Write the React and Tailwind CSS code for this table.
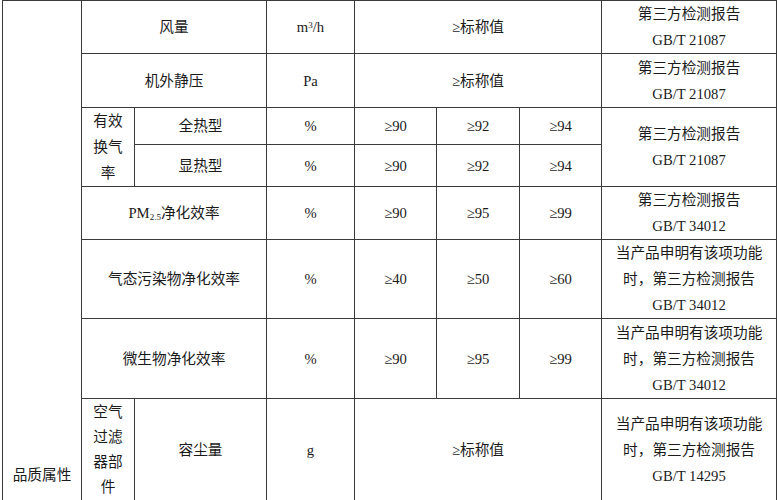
import React from 'react'

const cell = "border border-[#3a3a3a] text-center align-middle px-1 py-0"

const Remark = ({ lines }) => (
    <td className={cell}>
        {lines.map((l, i) => (
            <div key={i}>{l}</div>
        ))}
    </td>
)

const App = () => {
    return (
        <div lang="zh-CN" className="bg-white w-[777px] h-[500px] pl-[2px] overflow-hidden">
            <table
                className="border-collapse table-fixed w-[774px] text-[14.67px] leading-[26px] text-[#1a1a1a]"
                style={{ fontFamily: '"Liberation Serif", "Noto Sans CJK SC", serif' }}
            >
                <colgroup>
                    <col className="w-[79px]" />
                    <col className="w-[53px]" />
                    <col className="w-[132px]" />
                    <col className="w-[88px]" />
                    <col className="w-[82px]" />
                    <col className="w-[83px]" />
                    <col className="w-[82px]" />
                    <col className="w-[175px]" />
                </colgroup>
                <tbody>
                    <tr className="h-[52px]">
                        <td rowSpan={8} className="border border-[#3a3a3a] text-center align-bottom pb-[12px]">品质属性</td>
                        <td colSpan={2} className={cell}>风量</td>
                        <td className={cell}>m<sup className="text-[9px] leading-none">3</sup>/h</td>
                        <td colSpan={3} className={cell}>≥标称值</td>
                        <Remark lines={["第三方检测报告", "GB/T 21087"]} />
                    </tr>
                    <tr className="h-[54px]">
                        <td colSpan={2} className={cell}>机外静压</td>
                        <td className={cell}>Pa</td>
                        <td colSpan={3} className={cell}>≥标称值</td>
                        <Remark lines={["第三方检测报告", "GB/T 21087"]} />
                    </tr>
                    <tr className="h-[37px]">
                        <td rowSpan={2} className={cell}>有效<br />换气<br />率</td>
                        <td className={cell}>全热型</td>
                        <td className={cell}>%</td>
                        <td className={cell}>≥90</td>
                        <td className={cell}>≥92</td>
                        <td className={cell}>≥94</td>
                        <td rowSpan={2} className={cell}>
                            <div>第三方检测报告</div>
                            <div>GB/T 21087</div>
                        </td>
                    </tr>
                    <tr className="h-[42px]">
                        <td className={cell}>显热型</td>
                        <td className={cell}>%</td>
                        <td className={cell}>≥90</td>
                        <td className={cell}>≥92</td>
                        <td className={cell}>≥94</td>
                    </tr>
                    <tr className="h-[52px]">
                        <td colSpan={2} className={cell}>PM<sub className="text-[9px] leading-none">2.5</sub>净化效率</td>
                        <td className={cell}>%</td>
                        <td className={cell}>≥90</td>
                        <td className={cell}>≥95</td>
                        <td className={cell}>≥99</td>
                        <Remark lines={["第三方检测报告", "GB/T 34012"]} />
                    </tr>
                    <tr className="h-[78px]">
                        <td colSpan={2} className={cell}>气态污染物净化效率</td>
                        <td className={cell}>%</td>
                        <td className={cell}>≥40</td>
                        <td className={cell}>≥50</td>
                        <td className={cell}>≥60</td>
                        <Remark lines={["当产品申明有该项功能", "时，第三方检测报告", "GB/T 34012"]} />
                    </tr>
                    <tr className="h-[80px]">
                        <td colSpan={2} className={cell}>微生物净化效率</td>
                        <td className={cell}>%</td>
                        <td className={cell}>≥90</td>
                        <td className={cell}>≥95</td>
                        <td className={cell}>≥99</td>
                        <Remark lines={["当产品申明有该项功能", "时，第三方检测报告", "GB/T 34012"]} />
                    </tr>
                    <tr className="h-[102px]">
                        <td className={`${cell} leading-[25px]`}>空气<br />过滤<br />器部<br />件</td>
                        <td className={cell}>容尘量</td>
                        <td className={cell}>g</td>
                        <td colSpan={3} className={cell}>≥标称值</td>
                        <Remark lines={["当产品申明有该项功能", "时，第三方检测报告", "GB/T 14295"]} />
                    </tr>
                </tbody>
            </table>
        </div>
    )
}

export default App
